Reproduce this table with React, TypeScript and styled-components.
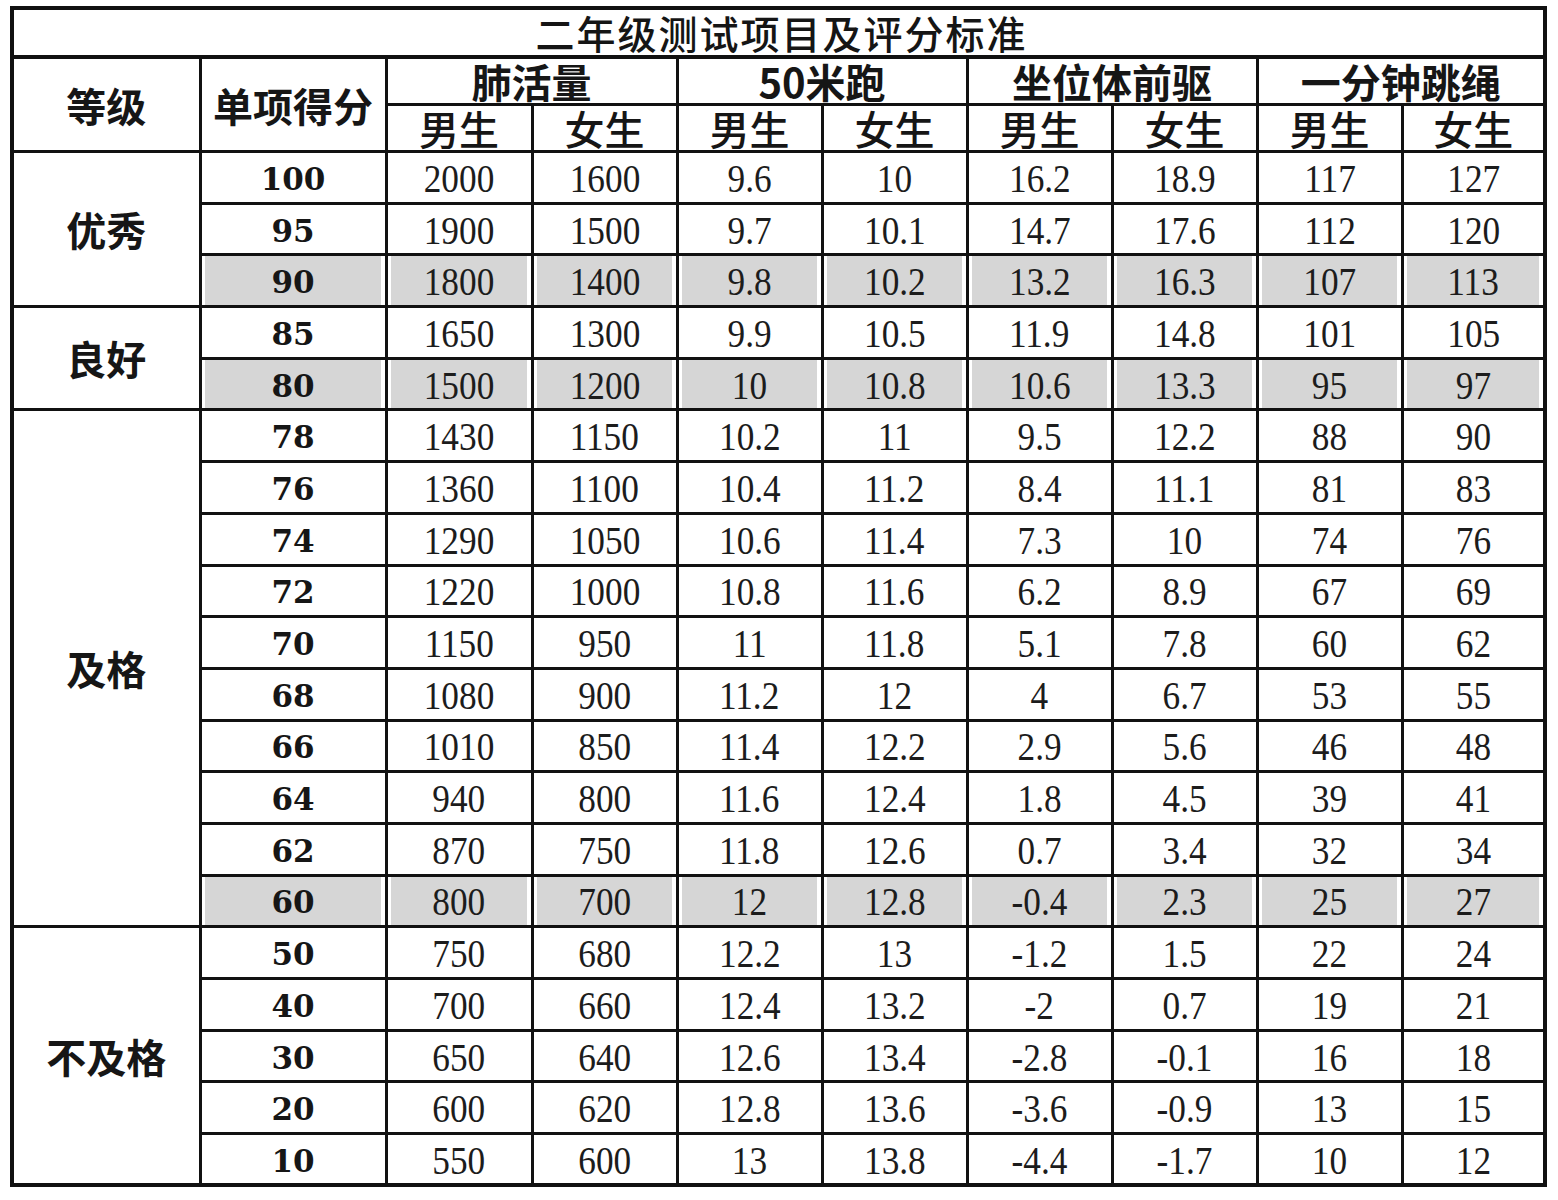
import React from "react";
import styled, { createGlobalStyle } from "styled-components";

const GlobalStyle = createGlobalStyle`
  html, body {
    margin: 0;
    padding: 0;
    background: #ffffff;
  }
`;

type Row = {
  score: number;
  values: string[];
  shaded?: boolean;
};

const groups: { label: string; rows: Row[] }[] = [
  {
    label: "优秀",
    rows: [
      { score: 100, values: ["2000", "1600", "9.6", "10", "16.2", "18.9", "117", "127"] },
      { score: 95, values: ["1900", "1500", "9.7", "10.1", "14.7", "17.6", "112", "120"] },
      { score: 90, values: ["1800", "1400", "9.8", "10.2", "13.2", "16.3", "107", "113"], shaded: true },
    ],
  },
  {
    label: "良好",
    rows: [
      { score: 85, values: ["1650", "1300", "9.9", "10.5", "11.9", "14.8", "101", "105"] },
      { score: 80, values: ["1500", "1200", "10", "10.8", "10.6", "13.3", "95", "97"], shaded: true },
    ],
  },
  {
    label: "及格",
    rows: [
      { score: 78, values: ["1430", "1150", "10.2", "11", "9.5", "12.2", "88", "90"] },
      { score: 76, values: ["1360", "1100", "10.4", "11.2", "8.4", "11.1", "81", "83"] },
      { score: 74, values: ["1290", "1050", "10.6", "11.4", "7.3", "10", "74", "76"] },
      { score: 72, values: ["1220", "1000", "10.8", "11.6", "6.2", "8.9", "67", "69"] },
      { score: 70, values: ["1150", "950", "11", "11.8", "5.1", "7.8", "60", "62"] },
      { score: 68, values: ["1080", "900", "11.2", "12", "4", "6.7", "53", "55"] },
      { score: 66, values: ["1010", "850", "11.4", "12.2", "2.9", "5.6", "46", "48"] },
      { score: 64, values: ["940", "800", "11.6", "12.4", "1.8", "4.5", "39", "41"] },
      { score: 62, values: ["870", "750", "11.8", "12.6", "0.7", "3.4", "32", "34"] },
      { score: 60, values: ["800", "700", "12", "12.8", "-0.4", "2.3", "25", "27"], shaded: true },
    ],
  },
  {
    label: "不及格",
    rows: [
      { score: 50, values: ["750", "680", "12.2", "13", "-1.2", "1.5", "22", "24"] },
      { score: 40, values: ["700", "660", "12.4", "13.2", "-2", "0.7", "19", "21"] },
      { score: 30, values: ["650", "640", "12.6", "13.4", "-2.8", "-0.1", "16", "18"] },
      { score: 20, values: ["600", "620", "12.8", "13.6", "-3.6", "-0.9", "13", "15"] },
      { score: 10, values: ["550", "600", "13", "13.8", "-4.4", "-1.7", "10", "12"] },
    ],
  },
];

const events = ["肺活量", "50米跑", "坐位体前驱", "一分钟跳绳"];
const colWidths = [188, 186, 146, 145, 145, 145, 145, 145, 145, 143];

const Page = styled.div`
  padding: 6px 0 0 10px;
`;

const Table = styled.table`
  border-collapse: collapse;
  table-layout: fixed;
  width: 1537px;
  border: 4px solid #111;
  color: #161616;
`;

const TitleCell = styled.th`
  height: 45px;
  padding: 0 0 0 6px;
  border-bottom: 4px solid #111;
  font-family: "Noto Sans CJK SC", "Noto Sans", sans-serif;
  font-size: 39px;
  font-weight: 500;
  line-height: 1;
  letter-spacing: 2px;
  text-align: center;
  color: #151515;
`;

const HeadCell = styled.th<{ $weight?: number }>`
  height: 44px;
  padding: 0;
  border: 3px solid #111;
  font-family: "Noto Sans CJK SC", "Noto Sans", sans-serif;
  font-size: 40px;
  font-weight: ${(p) => p.$weight ?? 500};
  line-height: 1;
  text-align: center;
  vertical-align: middle;
  white-space: nowrap;
`;

const BodyRow = styled.tr`
  height: 51.7px;
`;

const GroupCell = styled.td`
  padding: 0;
  border: 3px solid #111;
  font-family: "Noto Sans CJK SC", "Noto Sans", sans-serif;
  font-size: 40px;
  font-weight: 700;
  line-height: 1;
  text-align: center;
  vertical-align: middle;
  background: #fff;
`;

const Cell = styled.td<{ $shaded?: boolean }>`
  padding: 0;
  border: 3px solid #111;
  text-align: center;
  vertical-align: middle;
  line-height: 1;
  background: ${(p) => (p.$shaded ? "#d6d6d6" : "#fff")};
  box-shadow: ${(p) =>
    p.$shaded ? "inset 3px 0 0 #fff, inset -4px 0 0 #fff" : "none"};
`;

const Score = styled.span`
  display: inline-block;
  font-family: "DejaVu Serif", "Liberation Serif", serif;
  font-size: 31px;
  font-weight: 700;
  color: #161616;
  padding-top: 4px;
`;

const Value = styled.span`
  display: inline-block;
  font-family: "Liberation Serif", "Times New Roman", serif;
  font-size: 41px;
  color: #1c1c1c;
  transform: scaleX(0.86);
  padding-top: 2px;
`;

export default function App() {
  return (
    <Page>
      <GlobalStyle />
      <Table>
        <colgroup>
          {colWidths.map((w, i) => (
            <col key={i} style={{ width: w }} />
          ))}
        </colgroup>
        <thead>
          <tr>
            <TitleCell colSpan={10}>二年级测试项目及评分标准</TitleCell>
          </tr>
          <tr>
            <HeadCell rowSpan={2} $weight={700}>
              等级
            </HeadCell>
            <HeadCell rowSpan={2} $weight={700}>
              单项得分
            </HeadCell>
            {events.map((e) => (
              <HeadCell key={e} colSpan={2} $weight={600}>
                {e}
              </HeadCell>
            ))}
          </tr>
          <tr>
            {events.map((e) => (
              <React.Fragment key={e}>
                <HeadCell>男生</HeadCell>
                <HeadCell>女生</HeadCell>
              </React.Fragment>
            ))}
          </tr>
        </thead>
        <tbody>
          {groups.map((g) =>
            g.rows.map((r, i) => (
              <BodyRow key={r.score}>
                {i === 0 && <GroupCell rowSpan={g.rows.length}>{g.label}</GroupCell>}
                <Cell $shaded={r.shaded}>
                  <Score>{r.score}</Score>
                </Cell>
                {r.values.map((v, j) => (
                  <Cell key={j} $shaded={r.shaded}>
                    <Value>{v}</Value>
                  </Cell>
                ))}
              </BodyRow>
            ))
          )}
        </tbody>
      </Table>
    </Page>
  );
}
